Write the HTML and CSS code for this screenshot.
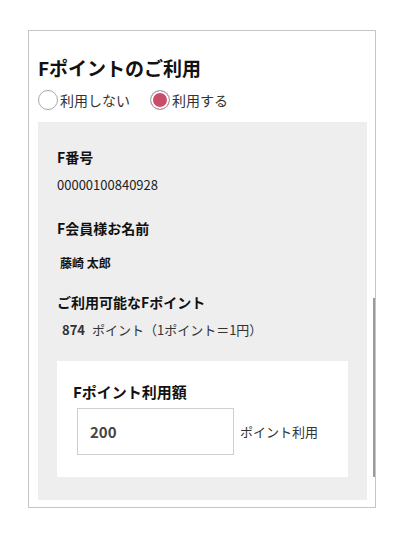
FILE: index.html
```html
<!DOCTYPE html>
<html lang="ja">
<head>
<meta charset="utf-8">
<link rel="stylesheet" href="styles.css">
</head>
<body>
<div class="card">
  <h2 class="title">Fポイントのご利用</h2>
  <div class="radios">
    <label class="radio"><span class="dot"></span><span class="rlabel">利用しない</span></label>
    <label class="radio"><span class="dot on"></span><span class="rlabel">利用する</span></label>
  </div>
  <div class="panel">
    <div class="label l1">F番号</div>
    <div class="value v1">00000100840928</div>
    <div class="label l2">F会員様お名前</div>
    <div class="name">藤崎 太郎</div>
    <div class="label l3">ご利用可能なFポイント</div>
    <div class="value pts"><b>874</b> ポイント（1ポイント＝1円）</div>
    <div class="usebox">
      <div class="label ul">Fポイント利用額</div>
      <div class="inrow">
        <div class="input">200</div>
        <span class="unit">ポイント利用</span>
      </div>
    </div>
  </div>
  <div class="scroll"></div>
</div>
</body>
</html>
```

FILE: styles.css
```css
html, body {
  margin: 0;
  padding: 0;
  background: #fff;
}
body {
  font-family: "Noto Sans CJK JP", "Noto Sans", sans-serif;
  color: #222;
}
.card {
  position: relative;
  box-sizing: border-box;
  margin: 30px 0 0 28px;
  width: 348px;
  border: 1px solid #c4c4c4;
  padding: 25px 8px 7px 9px;
}
.title {
  margin: 0;
  font-size: 19px;
  line-height: 24px;
  font-weight: 700;
  color: #111;
}
.radios {
  display: flex;
  align-items: center;
  gap: 20px;
  margin-top: 9px;
  height: 22px;
}
.radio {
  display: flex;
  align-items: center;
  gap: 2px;
}
.dot {
  box-sizing: border-box;
  width: 20px;
  height: 20px;
  border-radius: 50%;
  border: 1px solid #a8a8a8;
  background: #fff;
}
.dot.on {
  background: #c84d69;
  box-shadow: inset 0 0 0 2px #fff;
}
.rlabel {
  font-size: 14px;
  line-height: 20px;
  color: #333;
}
.panel {
  margin-top: 11px;
  background: #eeeeee;
  padding: 25px 19px 23px 19px;
}
.label {
  font-size: 14px;
  line-height: 20px;
  font-weight: 700;
  color: #111;
}
.value {
  font-size: 13px;
  line-height: 20px;
  color: #222;
}
.v1 { margin-top: 8px; }
.l2 { margin-top: 23px; }
.name {
  margin-top: 15px;
  padding-left: 3px;
  font-size: 12px;
  line-height: 20px;
  font-weight: 700;
  color: #111;
}
.l3 { margin-top: 19px; }
.pts {
  margin-top: 8px;
  padding-left: 5px;
  color: #333;
}
.pts b {
  font-weight: 700;
  margin-right: 4px;
}
.usebox {
  margin-top: 21px;
  background: #fff;
  padding: 21px 20px 22px 16px;
}
.ul { font-size: 15px; }
.inrow {
  display: flex;
  align-items: center;
  gap: 6px;
  margin-top: 6px;
  margin-left: 4px;
}
.input {
  box-sizing: border-box;
  width: 157px;
  height: 47px;
  border: 1px solid #cfcfcf;
  padding-left: 12px;
  font-size: 15px;
  font-weight: 700;
  line-height: 45px;
  color: #444;
}
.unit {
  font-size: 13px;
  color: #333;
}
.scroll {
  position: absolute;
  right: 0;
  top: 267px;
  width: 2px;
  height: 179px;
  background: #9c9c9c;
}
```
